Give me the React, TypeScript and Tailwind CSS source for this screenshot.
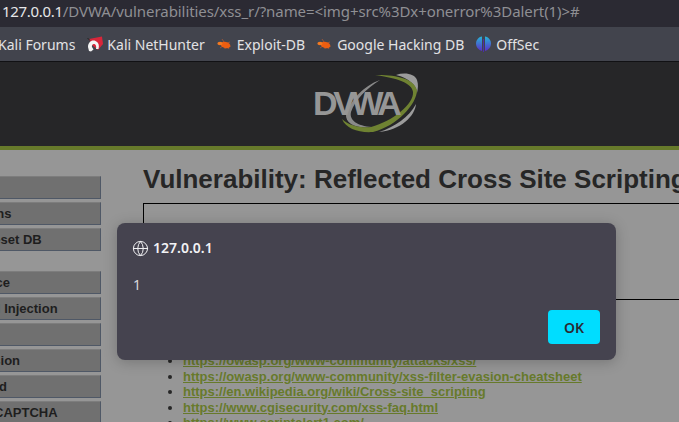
import { Globe } from 'lucide-react';

const bookmarks = [
  { label: 'Kali NetHunter', icon: 'kali' },
  { label: 'Exploit-DB', icon: 'bug' },
  { label: 'Google Hacking DB', icon: 'bug' },
  { label: 'OffSec', icon: 'offsec' },
];

const menuTop = ['Home', 'Instructions', 'Setup / Reset DB'];
const menuBottom = ['Brute Force', 'Command Injection', 'CSRF', 'File Inclusion', 'File Upload', 'Insecure CAPTCHA'];

const links = [
  'https://owasp.org/www-community/attacks/xss/',
  'https://owasp.org/www-community/xss-filter-evasion-cheatsheet',
  'https://en.wikipedia.org/wiki/Cross-site_scripting',
  'https://www.cgisecurity.com/xss-faq.html',
  'https://www.scriptalert1.com/',
];

function BookmarkIcon({ icon }: { icon: string }) {
  if (icon === 'kali') {
    return (
      <svg width="16" height="16" viewBox="0 0 16 16" className="-mr-px shrink-0">
        <path d="M2 3 L15 0.5 L16 8 L11 14 L5 9 Z" fill="#d8263a" />
        <path d="M1 11 C1 6 5 3.5 8.5 5 C11.5 6.2 12.5 9 11.5 13 L9 13 C9.5 10.5 9 8.6 7.5 8 C5.8 7.5 4.5 9 5 11 L6.5 13.5 L4 15.5 L2 15 Z" fill="#f4f4f4" />
        <path d="M0.5 2 L3 4.5" stroke="#222" strokeWidth="1" />
      </svg>
    );
  }
  if (icon === 'bug') {
    return (
      <svg width="15" height="14" viewBox="0 0 15 14" className="shrink-0">
        <path d="M5 2 L7 5 M3 11 L6 9 M8 12 L8 9 M12 12 L10 9 M13 5 L10 6" stroke="#d9652a" strokeWidth="0.8" opacity="0.7" />
        <ellipse cx="8.5" cy="8" rx="5" ry="3" transform="rotate(15 8.5 8)" fill="#ee5e10" />
        <ellipse cx="3" cy="6.5" rx="2.6" ry="1.8" fill="#f47a20" />
      </svg>
    );
  }
  return (
    <svg width="15" height="16" viewBox="0 0 15 16" className="shrink-0">
      <defs>
        <linearGradient id="offsec" x1="0" y1="0" x2="0" y2="1">
          <stop offset="0" stopColor="#27b4d8" />
          <stop offset="1" stopColor="#5a2fc8" />
        </linearGradient>
      </defs>
      <path d="M6 0.5 C2.5 1 0 4 0 7.5 C0 11 2.5 14 6 15 Z" fill="url(#offsec)" />
      <path d="M9 0.5 C12.5 1 15 4 15 7.5 C15 11 12.5 14 9 15 Z" fill="url(#offsec)" />
      <rect x="7" y="3" width="1" height="13" fill="#4a2bb0" />
    </svg>
  );
}

function DvwaLogo() {
  return (
    <svg width="108" height="64" viewBox="0 0 108 64" className="block">
      <path d="M83 3 C92 0 102 2 104 8 C105.5 12 105 17 104 21 C103 13 96 6 83 3 Z" fill="#9c9c9c" />
      <path d="M103 32 C102 44 88 58 66 60 C82 55 96 45 103 32 Z" fill="#9c9c9c" />
      <path d="M33 42 C38 28 50 14 67 8 C54 16 42 28 38 40 C36 48 44 54 59 55 C44 57 32 52 33 42 Z" fill="#8a8a8a" />
      <path d="M62 3 C80 3 100 5 104 18 C104 32 84 54 60 60 C46 61 33 57 29 47 C36 54 48 56 58 55 C80 49 101 32 100 20 C99 11 84 6 62 3 Z" fill="#6f8232" />
      <text x="0" y="43" fontFamily="'Liberation Sans', sans-serif" fontWeight="700" fontSize="34" letterSpacing="-4.4" fill="#969696">DVWA</text>
    </svg>
  );
}

export default function App() {
  return (
    <div className="relative flex h-[422px] w-[679px] flex-col overflow-hidden bg-[#969696] font-['Liberation_Sans',sans-serif]">
      <div className="flex h-[27px] shrink-0 items-center whitespace-nowrap bg-[#2b2a33] pb-[4px] pl-[2px] font-['Noto_Sans',sans-serif] text-[15px] text-[#8f8f94]">
        <span className="tracking-[-0.3px] text-[#e6e6e8]">127.0.0.1</span>
        <span className="tracking-[-0.07px]">/DVWA/vulnerabilities/xss_r/?name=&lt;img+src%3Dx+onerror%3Dalert(1)&gt;#</span>
      </div>

      <div className="flex h-[35px] shrink-0 items-center gap-[12px] whitespace-nowrap border-b border-[#111114] bg-[#42444d] font-['Noto_Sans',sans-serif] text-[14px] text-[#e2e2e4]">
        <span className="-ml-[2px]">Kali Forums</span>
        {bookmarks.map((b) => (
          <span key={b.label} className="flex items-center gap-[5px]">
            <BookmarkIcon icon={b.icon} />
            {b.label}
          </span>
        ))}
      </div>

      <div className="flex h-[84px] shrink-0 items-center justify-center bg-[#262628] pl-[54px]">
        <DvwaLogo />
      </div>
      <div className="h-[4px] shrink-0 bg-[#677a2b]" />

      <div className="flex min-h-0 flex-1">
        <div className="-ml-[79px] flex w-[180px] shrink-0 flex-col gap-[3px] pt-[26px] text-[13px] font-bold text-[#1e1e1e]">
          {menuTop.map((m) => (
            <div key={m} className="flex h-[23px] shrink-0 items-center border-t border-b border-r border-t-[#7d7d7d] border-b-[#4f5866] border-r-[#4f5866] bg-[#707070] pl-[16px]">
              {m}
            </div>
          ))}
          <div className="h-[14px] shrink-0" />
          {menuBottom.map((m) => (
            <div key={m} className="flex h-[23px] shrink-0 items-center border-t border-b border-r border-t-[#7d7d7d] border-b-[#4f5866] border-r-[#4f5866] bg-[#707070] pl-[16px]">
              {m}
            </div>
          ))}
        </div>

        <div className="ml-[42px] w-[700px] shrink-0 pt-[14px]">
          <h1 className="whitespace-nowrap text-[26px] leading-[30px] font-bold text-[#262626]">
            Vulnerability: Reflected Cross Site Scripting (XSS)
          </h1>
          <div className="mt-[9px] h-[97px] border border-black" />
          <ul className="mt-[53px] list-disc pl-[40px] text-[13px] leading-[15.5px] font-bold text-[#677a2b]">
            {links.map((l) => (
              <li key={l} className="text-[#262626]">
                <span className="text-[#677a2b] underline">{l}</span>
              </li>
            ))}
          </ul>
        </div>
      </div>

      <div className="absolute left-[117px] top-[223px] flex h-[137px] w-[499px] flex-col rounded-[8px] bg-[#45434f] px-[16px] pt-[15px] font-['Noto_Sans',sans-serif] text-[#f2f2f4] shadow-[0_2px_14px_rgba(0,0,0,0.22)]">
        <div className="flex items-center gap-[4px] text-[14px] leading-[20px] font-semibold">
          <Globe size={17} strokeWidth={1.4} className="-ml-px" />
          127.0.0.1
        </div>
        <div className="mt-[17px] text-[14px] leading-[20px] text-[#d9d9dc]">1</div>
        <div className="mt-auto mb-[16px] flex justify-end">
          <button className="h-[34px] w-[52px] rounded-[4px] bg-[#00ddff] text-[14px] font-semibold text-[#2b2a33]">
            OK
          </button>
        </div>
      </div>
    </div>
  );
}
